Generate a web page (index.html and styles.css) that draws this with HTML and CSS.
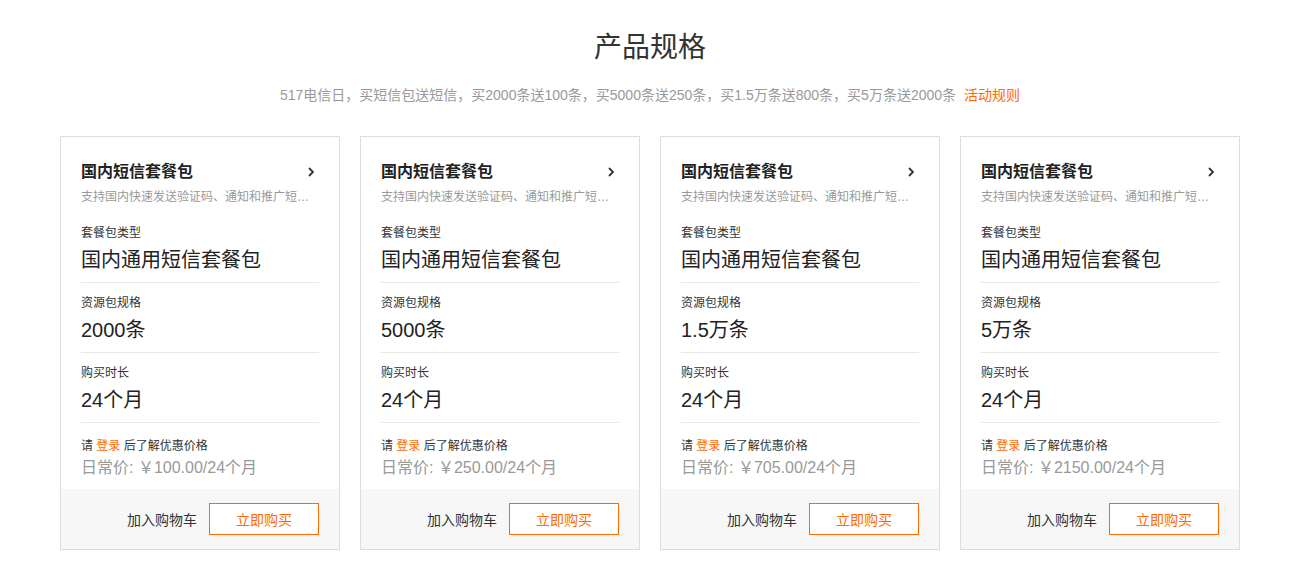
FILE: index.html
```html
<!DOCTYPE html>
<html lang="zh-CN">
<head>
  <meta charset="UTF-8">
  <title>产品规格</title>
  <link rel="stylesheet" href="styles.css">
</head>
<body>
  <div class="page">
    <h1 class="title">产品规格</h1>
    <p class="subtitle">517电信日，买短信包送短信，买2000条送100条，买5000条送250条，买1.5万条送800条，买5万条送2000条<a class="rule-link" href="#">活动规则</a></p>

    <div class="cards">
      <div class="card">
        <div class="card-body">
          <div class="card-head">
            <div class="card-title">国内短信套餐包
              <svg class="chevron" width="6" height="10" viewBox="0 0 6 10"><path d="M1 1l4 4-4 4" fill="none" stroke="#333" stroke-width="1.8"/></svg>
            </div>
            <div class="card-desc" title="支持国内快速发送验证码、通知和推广短信">支持国内快速发送验证码、通知和推广短…</div>
          </div>
          <div class="spec">
            <div class="spec-label">套餐包类型</div>
            <div class="spec-value">国内通用短信套餐包</div>
          </div>
          <div class="spec">
            <div class="spec-label">资源包规格</div>
            <div class="spec-value">2000条</div>
          </div>
          <div class="spec">
            <div class="spec-label">购买时长</div>
            <div class="spec-value">24个月</div>
          </div>
          <div class="login-tip">请 <a href="#">登录</a> 后了解优惠价格</div>
          <div class="price">日常价: ￥100.00/24个月</div>
        </div>
        <div class="card-foot">
          <span class="cart">加入购物车</span>
          <button class="buy">立即购买</button>
        </div>
      </div>

      <div class="card">
        <div class="card-body">
          <div class="card-head">
            <div class="card-title">国内短信套餐包
              <svg class="chevron" width="6" height="10" viewBox="0 0 6 10"><path d="M1 1l4 4-4 4" fill="none" stroke="#333" stroke-width="1.8"/></svg>
            </div>
            <div class="card-desc" title="支持国内快速发送验证码、通知和推广短信">支持国内快速发送验证码、通知和推广短…</div>
          </div>
          <div class="spec">
            <div class="spec-label">套餐包类型</div>
            <div class="spec-value">国内通用短信套餐包</div>
          </div>
          <div class="spec">
            <div class="spec-label">资源包规格</div>
            <div class="spec-value">5000条</div>
          </div>
          <div class="spec">
            <div class="spec-label">购买时长</div>
            <div class="spec-value">24个月</div>
          </div>
          <div class="login-tip">请 <a href="#">登录</a> 后了解优惠价格</div>
          <div class="price">日常价: ￥250.00/24个月</div>
        </div>
        <div class="card-foot">
          <span class="cart">加入购物车</span>
          <button class="buy">立即购买</button>
        </div>
      </div>

      <div class="card">
        <div class="card-body">
          <div class="card-head">
            <div class="card-title">国内短信套餐包
              <svg class="chevron" width="6" height="10" viewBox="0 0 6 10"><path d="M1 1l4 4-4 4" fill="none" stroke="#333" stroke-width="1.8"/></svg>
            </div>
            <div class="card-desc" title="支持国内快速发送验证码、通知和推广短信">支持国内快速发送验证码、通知和推广短…</div>
          </div>
          <div class="spec">
            <div class="spec-label">套餐包类型</div>
            <div class="spec-value">国内通用短信套餐包</div>
          </div>
          <div class="spec">
            <div class="spec-label">资源包规格</div>
            <div class="spec-value">1.5万条</div>
          </div>
          <div class="spec">
            <div class="spec-label">购买时长</div>
            <div class="spec-value">24个月</div>
          </div>
          <div class="login-tip">请 <a href="#">登录</a> 后了解优惠价格</div>
          <div class="price">日常价: ￥705.00/24个月</div>
        </div>
        <div class="card-foot">
          <span class="cart">加入购物车</span>
          <button class="buy">立即购买</button>
        </div>
      </div>

      <div class="card">
        <div class="card-body">
          <div class="card-head">
            <div class="card-title">国内短信套餐包
              <svg class="chevron" width="6" height="10" viewBox="0 0 6 10"><path d="M1 1l4 4-4 4" fill="none" stroke="#333" stroke-width="1.8"/></svg>
            </div>
            <div class="card-desc" title="支持国内快速发送验证码、通知和推广短信">支持国内快速发送验证码、通知和推广短…</div>
          </div>
          <div class="spec">
            <div class="spec-label">套餐包类型</div>
            <div class="spec-value">国内通用短信套餐包</div>
          </div>
          <div class="spec">
            <div class="spec-label">资源包规格</div>
            <div class="spec-value">5万条</div>
          </div>
          <div class="spec">
            <div class="spec-label">购买时长</div>
            <div class="spec-value">24个月</div>
          </div>
          <div class="login-tip">请 <a href="#">登录</a> 后了解优惠价格</div>
          <div class="price">日常价: ￥2150.00/24个月</div>
        </div>
        <div class="card-foot">
          <span class="cart">加入购物车</span>
          <button class="buy">立即购买</button>
        </div>
      </div>
    </div>
  </div>
</body>
</html>
```

FILE: styles.css
```css
body {
  margin: 0;
  font-family: "Liberation Sans", "Noto Sans CJK SC", sans-serif;
  color: #333;
  background-color: #fff;
}

.page {
  width: 1180px;
  padding-left: 60px;
}

.title {
  margin: 28px 0 0;
  font-size: 28px;
  line-height: 40px;
  font-weight: normal;
  text-align: center;
  color: #333;
}

.subtitle {
  margin: 17px 0 0;
  font-size: 14px;
  line-height: 20px;
  text-align: center;
  color: #999;
}

.rule-link {
  margin-left: 8px;
  color: #ff6a00;
  text-decoration: none;
}

.cards {
  display: flex;
  gap: 20px;
  margin-top: 31px;
}

.card {
  width: 278px;
  border: 1px solid #ddd;
  background-color: #fff;
}

.card-body {
  padding: 23px 20px 10px;
}

.card-head {
  padding-bottom: 6px;
}

.card-title {
  display: flex;
  justify-content: space-between;
  align-items: center;
  font-size: 16px;
  line-height: 24px;
  font-weight: bold;
  color: #222;
}

.chevron {
  margin-right: 5px;
}

.card-desc {
  margin-top: 3px;
  font-size: 12px;
  line-height: 20px;
  color: #999;
  white-space: nowrap;
}

.spec {
  padding: 10px 0 8px;
  border-bottom: 1px solid #e8e8e8;
}

.spec-label {
  font-size: 12px;
  line-height: 20px;
  color: #333;
}

.spec-value {
  margin-top: 3px;
  font-size: 20px;
  line-height: 28px;
  color: #222;
}

.login-tip {
  margin-top: 13px;
  font-size: 12px;
  line-height: 20px;
  color: #333;
}

.login-tip a {
  color: #ff6a00;
  text-decoration: none;
}

.price {
  margin-top: 1px;
  font-size: 16px;
  line-height: 22px;
  color: #999;
}

.card-foot {
  display: flex;
  justify-content: flex-end;
  align-items: center;
  gap: 12px;
  height: 60px;
  padding: 0 20px;
  background-color: #f7f7f7;
}

.cart {
  font-size: 14px;
  color: #333;
}

.buy {
  width: 110px;
  height: 32px;
  border: 1px solid #ff6a00;
  background-color: #fff;
  color: #ff6a00;
  font-family: inherit;
  font-size: 14px;
  cursor: pointer;
}
```
